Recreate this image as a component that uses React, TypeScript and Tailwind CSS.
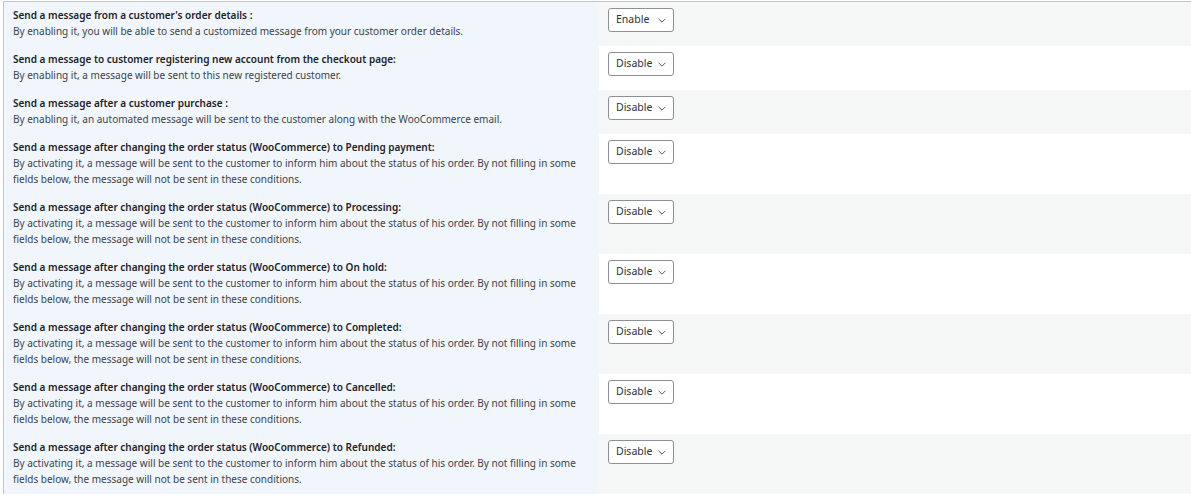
const STATUS_TEXT =
  'By activating it, a message will be sent to the customer to inform him about the status of his order. By not filling in some fields below, the message will not be sent in these conditions.';

const settings = [
  {
    title: "Send a message from a customer's order details :",
    desc: 'By enabling it, you will be able to send a customized message from your customer order details.',
    value: 'Enable',
  },
  {
    title: 'Send a message to customer registering new account from the checkout page:',
    desc: 'By enabling it, a message will be sent to this new registered customer.',
    value: 'Disable',
  },
  {
    title: 'Send a message after a customer purchase :',
    desc: 'By enabling it, an automated message will be sent to the customer along with the WooCommerce email.',
    value: 'Disable',
  },
  { title: 'Send a message after changing the order status (WooCommerce) to Pending payment:', desc: STATUS_TEXT, value: 'Disable' },
  { title: 'Send a message after changing the order status (WooCommerce) to Processing:', desc: STATUS_TEXT, value: 'Disable' },
  { title: 'Send a message after changing the order status (WooCommerce) to On hold:', desc: STATUS_TEXT, value: 'Disable' },
  { title: 'Send a message after changing the order status (WooCommerce) to Completed:', desc: STATUS_TEXT, value: 'Disable' },
  { title: 'Send a message after changing the order status (WooCommerce) to Cancelled:', desc: STATUS_TEXT, value: 'Disable' },
  { title: 'Send a message after changing the order status (WooCommerce) to Refunded:', desc: STATUS_TEXT, value: 'Disable' },
];

function SelectBox({ value }: { value: string }) {
  return (
    <div className="flex h-6 w-[66px] items-center justify-between rounded-[3px] border border-[#8c8f94] bg-white pl-[7px] pr-[7px] text-[10.5px] text-[#2c3338]">
      <span>{value}</span>
      <svg width="8" height="5" viewBox="0 0 8 5" fill="none" className="mt-px">
        <path d="M0.6 0.8 L4 4.2 L7.4 0.8" stroke="#50575e" strokeWidth="1" />
      </svg>
    </div>
  );
}

export default function App() {
  return (
    <div className="min-h-[495px] bg-white pl-[3px] pt-px font-['Noto_Sans',sans-serif]">
      <div className="border-l border-t border-[#c3c4c7]">
        {settings.map((s, i) => (
          <div key={s.title} className="flex">
            <div className="w-[595px] shrink-0 bg-[#f0f6fc] pb-[7px] pl-[9px] pr-[10px] pt-[6px]">
              <div className="text-[10px] font-semibold leading-[15px] text-[#1d2327]">{s.title}</div>
              <div className="text-[10px] leading-[16px] text-[#3c434a]">{s.desc}</div>
            </div>
            <div className={`flex-1 pl-[9px] pt-[6px] ${i % 2 === 0 ? 'bg-[#f6f7f7]' : 'bg-white'}`}>
              <SelectBox value={s.value} />
            </div>
          </div>
        ))}
      </div>
    </div>
  );
}
